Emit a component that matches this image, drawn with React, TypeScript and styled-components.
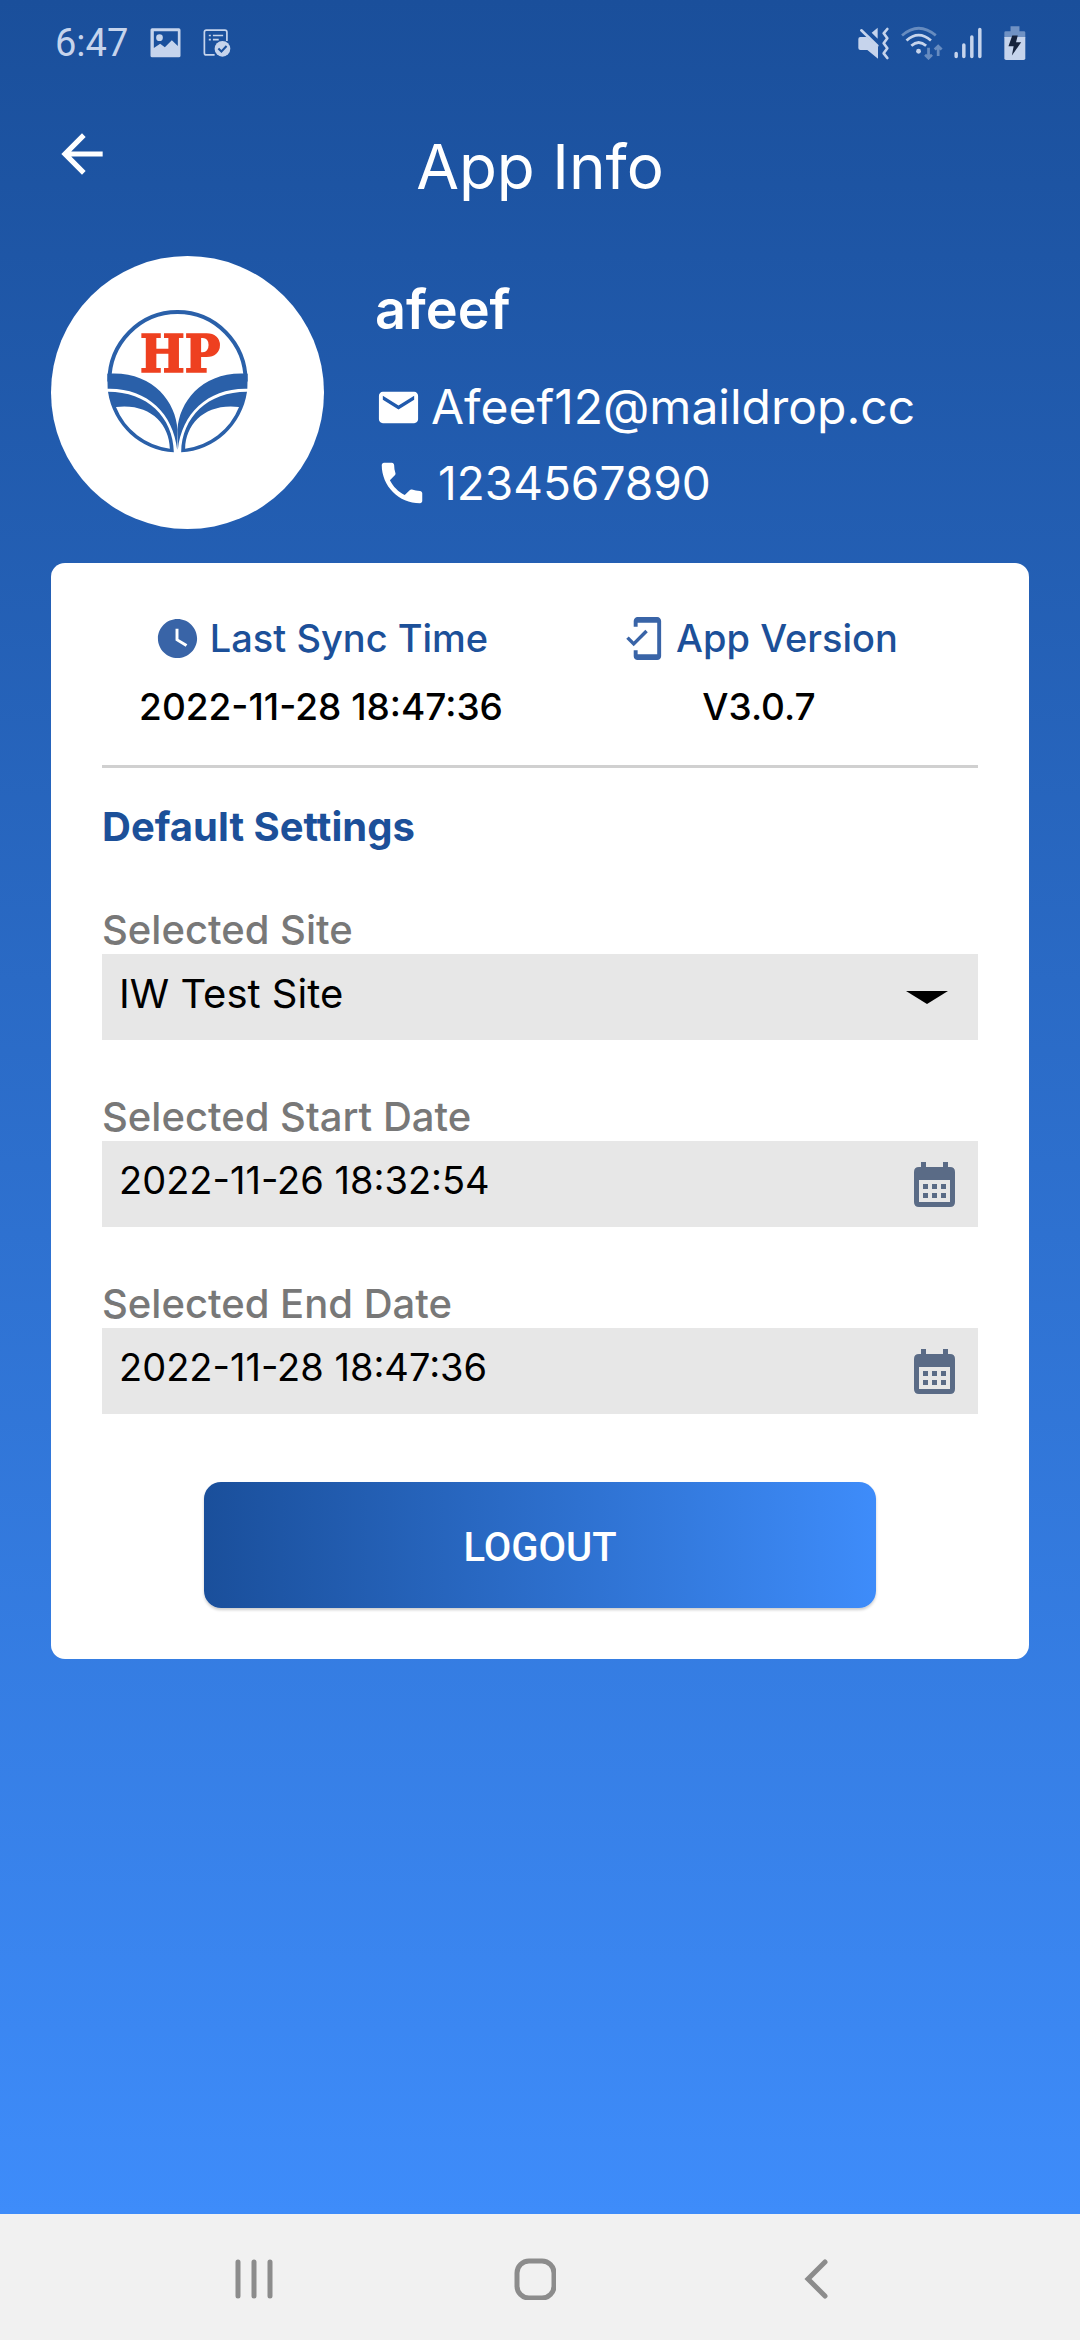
import React from "react";
import styled, { createGlobalStyle } from "styled-components";
import {
  MdArrowBack,
  MdMail,
  MdMobileFriendly,
  MdPhone,
  MdWatchLater,
} from "react-icons/md";

const GlobalStyle = createGlobalStyle`
  *, *::before, *::after { box-sizing: border-box; }
  body { margin: 0; font-family: Inter, "Noto Sans", sans-serif; }
  h1, h2, p, dl, dt, dd { margin: 0; font-weight: inherit; font-size: inherit; }
  button, input, select { font: inherit; color: inherit; border: 0; margin: 0; border-radius: 0; }
  button { padding: 0; background: none; cursor: pointer; }
  svg { display: block; flex: none; }
`;

const Screen = styled.div`
  display: flex;
  flex-direction: column;
  min-height: 100vh;
  background: #f1f1f1;
`;

const Content = styled.main`
  flex: 1;
  padding: 0 51px 51px;
  background: linear-gradient(#1a4f9b, #3e8cfa);
`;

const StatusBar = styled.div`
  display: flex;
  align-items: center;
  justify-content: space-between;
  height: 86px;
  padding: 0 3px 0 4px;
  color: #c6d4ec;
  font-family: Roboto, sans-serif;
  font-size: 38px;
`;

const StatusGroup = styled.div<{ $gap: number }>`
  display: flex;
  align-items: center;
  gap: ${(p) => p.$gap}px;
`;

const Header = styled.header`
  display: grid;
  grid-template-columns: 1fr auto 1fr;
  align-items: start;
  padding: 37px 0 53px;
  color: #fff;
`;

const BackButton = styled.button`
  justify-self: start;
  font-size: 62px;
`;

const Title = styled.h1`
  margin-top: 8px;
  font-size: 62px;
  line-height: 72px;
`;

const Profile = styled.section`
  display: flex;
  align-items: flex-start;
  gap: 51px;
  margin-bottom: 34px;
  color: #fff;
`;

const Avatar = styled.div`
  flex: none;
  width: 273px;
  height: 273px;
  padding: 54px 0 0 56px;
  border-radius: 50%;
  background: #fff;
`;

const Details = styled.div`
  display: flex;
  flex-direction: column;
  gap: 12px;
  padding-top: 22px;
  line-height: 64px;
`;

const Name = styled.h2`
  margin-bottom: 21px;
  font-size: 54px;
  font-weight: 600;
`;

const Contact = styled.p<{ $size: number }>`
  display: flex;
  align-items: center;
  gap: 9px;
  font-size: ${(p) => p.$size}px;
`;

const Card = styled.section`
  padding: 51px;
  border-radius: 14px;
  background: #fff;
`;

const Facts = styled.dl`
  display: grid;
  grid-template-columns: 1fr 1fr;
  padding-bottom: 36px;
  border-bottom: 3px solid #d0d0d0;
  text-align: center;
`;

const FactName = styled.dt`
  display: flex;
  align-items: center;
  justify-content: center;
  gap: 9px;
  margin-bottom: 23px;
  color: #1c5099;
  font-size: 38px;
  font-weight: 500;
  line-height: 48px;

  svg {
    color: #3964a7;
    font-size: 47px;
  }
`;

const FactValue = styled.dd`
  color: #000;
  font-size: 37px;
  font-weight: 500;
  line-height: 44px;
`;

const SectionTitle = styled.h2`
  margin-top: 35px;
  color: #1c5099;
  font-size: 40px;
  font-weight: 700;
  line-height: 48px;
`;

const Form = styled.form`
  display: flex;
  flex-direction: column;
  gap: 53px;
  padding-top: 55px;
`;

const Label = styled.label`
  display: block;
  color: #787878;
  font-size: 40px;
  font-weight: 500;
  line-height: 48px;
`;

const Field = styled.div`
  display: grid;
  align-items: center;
  height: 86px;
  background: #e7e7e7;
  color: #000;

  > * {
    grid-area: 1 / 1;
  }
`;

const Select = styled.select`
  appearance: none;
  width: 100%;
  height: 100%;
  padding: 0 90px 8px 17px;
  background: none;
  font-size: 40px;
`;

const DateInput = styled.input`
  width: 100%;
  height: 100%;
  padding: 0 90px 8px 17px;
  background: none;
  font-size: 38px;
`;

const Caret = styled.svg`
  justify-self: end;
  margin-right: 30px;
  pointer-events: none;
`;

const CalendarButton = styled.button`
  justify-self: end;
  margin-right: 23px;
  color: #5a6b86;
`;

const LogoutButton = styled.button`
  height: 126px;
  margin: 15px 102px 0;
  padding-top: 4px;
  border-radius: 17px;
  background: linear-gradient(90deg, #1a4f9b, #3e8cfa);
  box-shadow: 0 2px 3px rgba(0, 0, 0, 0.2);
  color: #fff;
  font-family: Roboto, sans-serif;
  font-size: 40px;
  font-weight: 500;
`;

const NavBar = styled.nav`
  display: flex;
  height: 126px;
  padding: 0 124px 0 114px;
  color: #8c8c8c;
`;

const NavButton = styled.button`
  display: flex;
  flex: 1;
  align-items: center;
  justify-content: center;
  padding-top: 4px;
`;

function HpLogo() {
  const half = (
    <>
      <path d="M202 402C335 392 408 484 413 570L412 630C400 520 320 444 203 447Z" />
      <path
        fillRule="evenodd"
        d="M204 456C322 456 400 532 402 638A212 214 0 0 1 204 456ZM228 502C328 490 388 550 390 627A200 202 0 0 1 228 502Z"
      />
    </>
  );
  return (
    <svg width="141" height="143" viewBox="202 210 422 430" fill="#2a60a9" role="img" aria-label="HP logo">
      <path d="M208 425A205 209 0 0 1 618 425" fill="none" stroke="#2a60a9" strokeWidth="12" />
      {half}
      <g transform="translate(826 0) scale(-1 1)">{half}</g>
      <text
        x="421"
        y="395"
        textAnchor="middle"
        fontFamily="'DejaVu Serif Condensed', 'DejaVu Serif', serif"
        fontWeight="700"
        fontSize="158"
        fill="#ee4020"
        stroke="#ee4020"
        strokeWidth="5"
      >
        HP
      </text>
    </svg>
  );
}

function PictureIcon() {
  return (
    <svg width="31" height="30" viewBox="436 83 92 90" fill="currentColor" aria-hidden="true">
      <path
        fillRule="evenodd"
        d="M442 84H522Q527 84 527 89V166Q527 171 522 171H442Q437 171 437 166V89Q437 84 442 84ZM447 93V143L466 130L480 141L501 120L519 137V93Z"
      />
      <circle cx="464" cy="112" r="10" />
    </svg>
  );
}

function TaskIcon() {
  return (
    <svg width="28" height="28" viewBox="588 87 82 82" fill="none" stroke="currentColor" strokeWidth="5" aria-hidden="true">
      <path d="M622 163H598Q592 163 592 157V96Q592 90 598 90H652Q658 90 658 96V122" />
      <path d="M605 106H611M617 106H647M605 118H611M617 118H634" />
      <circle cx="645" cy="145" r="23" fill="currentColor" stroke="none" />
      <path d="M633 144L642 153L657 137" stroke="#1a509c" strokeWidth="6" />
    </svg>
  );
}

function MutedVibrateIcon() {
  return (
    <svg width="32" height="33" viewBox="922 78 96 99" fill="currentColor" aria-hidden="true">
      <path d="M929 108H948L982 137V173L950 147H929Q923 147 923 141V114Q923 108 929 108ZM981 80V113L963 95Z" />
      <path
        d="M932 88L980 134M1010 84L999 97L1010 112L999 127L1010 142L999 157L1010 171"
        fill="none"
        stroke="currentColor"
        strokeWidth="8"
        strokeLinecap="round"
        strokeLinejoin="round"
      />
    </svg>
  );
}

function WifiIcon() {
  return (
    <svg width="42" height="34" viewBox="1050 78 122 98" fill="none" stroke="currentColor" strokeWidth="8" aria-hidden="true">
      <path d="M1053 105Q1101 63 1151 105M1130 141V170M1120 161L1130 171L1140 161M1158 165V137M1148 146L1158 136L1168 146" opacity="0.45" />
      <path d="M1066 120Q1101 88 1137 120M1080 135Q1101 116 1123 135" />
      <circle cx="1101" cy="151" r="7" fill="currentColor" stroke="none" />
    </svg>
  );
}

function SignalIcon() {
  return (
    <svg width="28" height="32" viewBox="1204 84 80 92" stroke="currentColor" strokeWidth="10" strokeLinecap="round" aria-hidden="true">
      <path d="M1210 160V169M1232 136V169M1255 113V169M1278 91V169" />
    </svg>
  );
}

function BatteryIcon() {
  return (
    <svg width="22" height="34" viewBox="1346 78 64 99" fill="currentColor" aria-hidden="true">
      <path d="M1347 112V97Q1347 93 1351 93H1365V79H1391V93H1404Q1408 93 1408 97V112Z" opacity="0.5" />
      <path d="M1347 110H1408V172Q1408 177 1403 177H1352Q1347 177 1347 172Z" />
      <path d="M1370 106H1386L1381 125H1396L1369 164L1374 137H1359Z" fill="#16233c" />
    </svg>
  );
}

function CalendarIcon() {
  return (
    <svg width="41" height="45" viewBox="0 0 41 45" fill="currentColor" aria-hidden="true">
      <path
        fillRule="evenodd"
        d="M7 0H12V5H29V0H34V5H36Q41 5 41 10V40Q41 45 36 45H5Q0 45 0 40V10Q0 5 5 5H7ZM5 18V40H36V18Z"
      />
      <path d="M9 22H14V27H9ZM18 22H23V27H18ZM27 22H32V27H27ZM9 31H14V36H9ZM18 31H23V36H18ZM27 31H32V36H27Z" />
    </svg>
  );
}

function DateField({ id, label, value }: { id: string; label: string; value: string }) {
  return (
    <div>
      <Label htmlFor={id}>{label}</Label>
      <Field>
        <DateInput id={id} type="text" defaultValue={value} />
        <CalendarButton type="button" aria-label={`Pick ${label.toLowerCase()}`}>
          <CalendarIcon />
        </CalendarButton>
      </Field>
    </div>
  );
}

export default function App() {
  return (
    <Screen>
      <GlobalStyle />
      <Content>
        <StatusBar>
          <StatusGroup $gap={22}>
            <span>6:47</span>
            <PictureIcon />
            <TaskIcon />
          </StatusGroup>
          <StatusGroup $gap={22}>
            <StatusGroup $gap={11}>
              <MutedVibrateIcon />
              <WifiIcon />
              <SignalIcon />
            </StatusGroup>
            <BatteryIcon />
          </StatusGroup>
        </StatusBar>

        <Header>
          <BackButton type="button" aria-label="Back">
            <MdArrowBack />
          </BackButton>
          <Title>App Info</Title>
        </Header>

        <Profile>
          <Avatar>
            <HpLogo />
          </Avatar>
          <Details>
            <Name>afeef</Name>
            <Contact $size={48}>
              <MdMail size={47} />
              Afeef12@maildrop.cc
            </Contact>
            <Contact $size={46}>
              <MdPhone size={54} />
              1234567890
            </Contact>
          </Details>
        </Profile>

        <Card>
          <Facts>
            <div>
              <FactName>
                <MdWatchLater />
                Last Sync Time
              </FactName>
              <FactValue>2022-11-28 18:47:36</FactValue>
            </div>
            <div>
              <FactName>
                <MdMobileFriendly />
                App Version
              </FactName>
              <FactValue>V3.0.7</FactValue>
            </div>
          </Facts>

          <SectionTitle>Default Settings</SectionTitle>
          <Form onSubmit={(event) => event.preventDefault()}>
            <div>
              <Label htmlFor="site">Selected Site</Label>
              <Field>
                <Select id="site" defaultValue="iw-test">
                  <option value="iw-test">IW Test Site</option>
                </Select>
                <Caret width="42" height="13" viewBox="0 0 42 13" aria-hidden="true">
                  <path d="M0 0H42L21 13Z" />
                </Caret>
              </Field>
            </div>
            <DateField id="start-date" label="Selected Start Date" value="2022-11-26 18:32:54" />
            <DateField id="end-date" label="Selected End Date" value="2022-11-28 18:47:36" />
            <LogoutButton type="submit">LOGOUT</LogoutButton>
          </Form>
        </Card>
      </Content>

      <NavBar>
        <NavButton type="button" aria-label="Recent apps">
          <svg width="40" height="42" viewBox="0 0 40 42" stroke="currentColor" strokeWidth="5" strokeLinecap="round">
            <path d="M4 4V38M20 4V38M36 4V38" />
          </svg>
        </NavButton>
        <NavButton type="button" aria-label="Home">
          <svg width="42" height="42" viewBox="0 0 42 42" fill="none" stroke="currentColor" strokeWidth="5">
            <rect x="3" y="3" width="37" height="37" rx="12" />
          </svg>
        </NavButton>
        <NavButton type="button" aria-label="Back">
          <svg width="24" height="42" viewBox="0 0 24 42" fill="none" stroke="currentColor" strokeWidth="5" strokeLinecap="round">
            <path d="M21 4L4 21L21 38" />
          </svg>
        </NavButton>
      </NavBar>
    </Screen>
  );
}
